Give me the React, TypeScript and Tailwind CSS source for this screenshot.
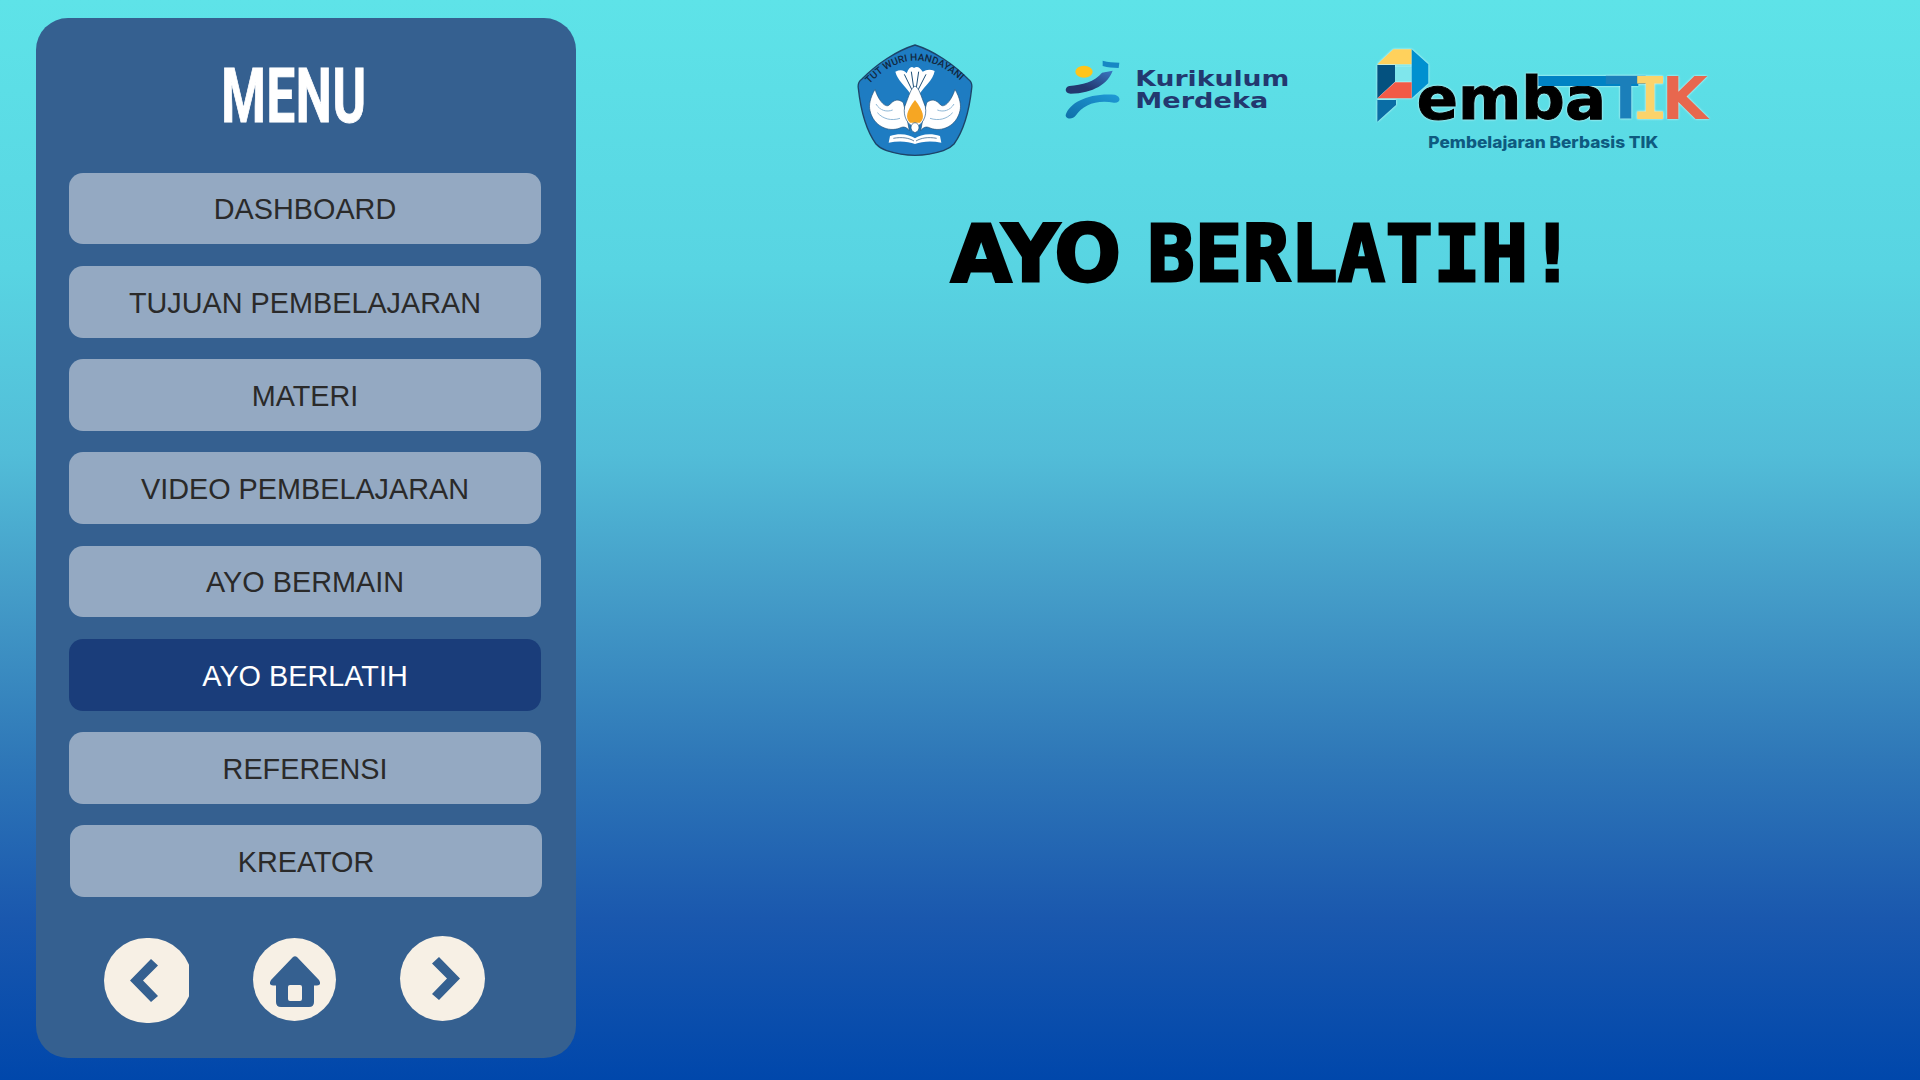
import React from 'react';

const menuItems = [
  { label: 'DASHBOARD', short: true },
  { label: 'TUJUAN PEMBELAJARAN' },
  { label: 'MATERI' },
  { label: 'VIDEO PEMBELAJARAN' },
  { label: 'AYO BERMAIN', short: true },
  { label: 'AYO BERLATIH', active: true },
  { label: 'REFERENSI' },
  { label: 'KREATOR' },
];

const Wing: React.FC = () => (
  <g>
    <path
      d="M75 148C60 175 56 195 60 212C70 258 115 278 150 264C162 258 170 262 178 272L172 240L160 188C146 176 132 178 118 195C105 205 85 180 75 148Z"
      fill="#fff"
      stroke="#1c4f78"
      strokeWidth="2"
    />
    <path d="M82 218C100 238 125 243 150 235M78 192C90 212 110 217 128 210" fill="none" stroke="#8fb8d6" strokeWidth="3" />
  </g>
);

const TutWuri: React.FC = () => (
  <svg viewBox="0 0 390 360" className="h-[120px] w-[130px]">
    <path
      d="M195 15C250 32 310 72 355 118Q368 128 365 145C358 210 342 270 312 312Q300 325 280 332C225 350 165 350 110 332Q90 325 78 312C48 270 32 210 25 145Q22 128 35 118C80 72 140 32 195 15Z"
      fill="#1e7cc2"
      stroke="#1d4468"
      strokeWidth="4"
    />
    <path id="tut-arc" d="M55 135Q195 -12 345 135" fill="none" />
    <text fontFamily="Roboto, sans-serif" fontWeight="500" fontSize="30" fill="#12283f">
      <textPath href="#tut-arc" startOffset="4">TUT WURI HANDAYANI</textPath>
    </text>
    <path
      d="M136 95Q158 84 170 100Q180 74 192 84Q205 74 218 95Q236 84 254 93C248 122 226 136 210 160L180 160C165 136 143 122 136 95Z"
      fill="#fff"
    />
    <path d="M163 103L186 150M184 95L192 150M206 95L198 150M228 103L204 150" stroke="#1c4f78" strokeWidth="3" fill="none" />
    <Wing />
    <g transform="translate(390 0) scale(-1 1)">
      <Wing />
    </g>
    <path d="M195 138C208 145 212 165 226 200C232 230 216 256 195 262C174 256 158 230 164 200C178 165 182 145 195 138Z" fill="#fff" stroke="#1c4f78" strokeWidth="2" />
    <path d="M195 180C170 212 164 234 180 248L210 248C226 234 220 212 195 180Z" fill="#f6a623" />
    <path d="M195 248C210 250 212 272 195 278C178 272 180 250 195 248Z" fill="#fff" stroke="#1c4f78" strokeWidth="2" />
    <path d="M120 288C150 278 180 284 195 295C210 284 240 278 270 288L274 308C245 302 215 304 195 312C175 304 145 302 116 308Z" fill="#fff" />
    <path d="M130 295C155 290 178 294 192 303M260 295C235 290 212 294 198 303" stroke="#1c4f78" strokeWidth="2" fill="none" />
  </svg>
);

const KurikulumLogo: React.FC = () => (
  <svg viewBox="0 0 810 300" className="h-[100px] w-[270px]">
    <defs>
      <linearGradient id="swoosh-top" x1="0" x2="1" y1="1" y2="0">
        <stop offset="0.35" stopColor="#23386f" />
        <stop offset="1" stopColor="#3a78c4" />
      </linearGradient>
      <linearGradient id="swoosh-bottom" x1="0" x2="1" y1="1" y2="0">
        <stop offset="0" stopColor="#0f6ea8" />
        <stop offset="1" stopColor="#1f9bd7" />
      </linearGradient>
    </defs>
    <ellipse cx="132" cy="95" rx="26" ry="18" fill="#ffc51a" />
    <path d="M188 62C205 68 220 66 238 68L236 84C218 82 204 84 188 78Z" fill="#1787c4" />
    <path d="M88 138C125 135 165 125 186 98L218 92C205 130 160 160 92 161C72 160 74 140 88 138Z" fill="url(#swoosh-top)" />
    <path d="M78 222C90 188 145 158 225 164C245 170 242 190 222 188C170 178 128 195 108 226C96 242 72 236 78 222Z" fill="url(#swoosh-bottom)" />
    <g fontFamily="'DejaVu Sans', sans-serif" fontWeight="700" fontSize="62" fill="#23386f">
      <text x="286" y="137" textLength="462" lengthAdjust="spacingAndGlyphs">Kurikulum</text>
      <text x="286" y="205" textLength="399" lengthAdjust="spacingAndGlyphs">Merdeka</text>
    </g>
  </svg>
);

const PembaTikLogo: React.FC = () => (
  <svg viewBox="0 0 1110 390" className="h-[130px] w-[370px]">
    <g className="drop-shadow-[0_0_3px_#e4fcfd]">
      <path d="M105 110H155V155H105Z" fill="#7fe6ec" />
      <path d="M52 103L100 58H155V103Z" fill="#ffd15c" />
      <path d="M155 58L205 103V160L155 205V155V110Z" fill="#0090d0" />
      <path d="M52 105H105V155L52 205Z" fill="#04517f" />
      <path d="M52 205L105 157H155V205Z" fill="#f25a46" />
      <path d="M52 210H108V225L52 275Z" fill="#0a6da5" />
      <g fontFamily="'DejaVu Sans', sans-serif" fontWeight="700" fontSize="178">
        <text x="170" y="268" fill="#000" stroke="#000" strokeWidth="3" textLength="568" lengthAdjust="spacingAndGlyphs">
          emba
        </text>
        <path d="M535 138H835V168H535Z" fill="#0082c4" />
        <text x="797" y="268" textAnchor="middle" fill="#1b7fba">T</text>
        <text x="870" y="268" textAnchor="middle" fontFamily="'DejaVu Sans Mono', monospace" fill="#fbd36b">I</text>
        <text x="905" y="268" fill="#e8674e">K</text>
      </g>
    </g>
    <text x="205" y="354" fontFamily="Inter, sans-serif" fontWeight="800" fontSize="48" fill="#0e5a80" textLength="690" lengthAdjust="spacingAndGlyphs">
      Pembelajaran Berbasis TIK
    </text>
  </svg>
);

export default function App() {
  return (
    <div className="flex h-screen w-full overflow-hidden bg-[linear-gradient(180deg,#5ee3e8_0%,#58d4e2_25%,#52bdd8_42%,#449cc8_55%,#2f78b8_70%,#1a58ae_85%,#0047ab_100%)]">
      <aside className="mt-[18px] ml-[36px] flex h-[1040px] w-[540px] shrink-0 flex-col rounded-[32px] bg-[#356090] pl-[33px]">
        <h2 className="mt-[28px] mb-[2px] h-[125px] w-[450px] scale-x-[0.67] text-center font-['Roboto',sans-serif] text-[76px] leading-[100px] font-bold tracking-[1px] text-white [-webkit-text-stroke:1px_white]">
          MENU
        </h2>
        <div className="flex flex-col gap-[21px]">
          {menuItems.map((item, index) => (
            <button
              key={item.label}
              className={`flex w-[472px] items-center justify-center rounded-[14px] pt-[3px] font-['Liberation_Sans',Arial,sans-serif] text-[28.8px] ${
                item.active ? 'bg-[#1a3d7a] text-white' : 'bg-[#94a9c2] text-[#2a2a2a]'
              } ${item.short ? 'mb-px h-[71px]' : 'h-[72px]'} ${index >= 4 ? 'translate-y-px' : ''} ${index === 7 ? 'translate-x-px' : ''}`}
            >
              {item.label}
            </button>
          ))}
        </div>
        <div className="mt-[40px] flex items-start gap-[64px] pl-[35px]">
          <div className="mt-[2px] h-[85px] w-[85px] overflow-hidden">
            <div className="flex h-[85px] w-[88px] items-center justify-center rounded-full bg-[#f7f0e5] pr-[8px]">
              <svg viewBox="0 0 28 43" className="h-[43px] w-[28px]" fill="#356090">
                <path d="M0 21.5L21 0L28 6.5L13 21.5L28 37L21 43Z" />
              </svg>
            </div>
          </div>
          <div className="mt-[2px] flex h-[83px] w-[83px] items-center justify-center rounded-full bg-[#f7f0e5] pt-[3px]">
            <svg viewBox="0 0 50 51" className="h-[51px] w-[50px]" fill="#356090">
              <path
                fillRule="evenodd"
                d="M23 1Q25 -0.5 27 1L49 24Q52 29 47 29.5H44V46Q44 51 39 51H11Q6 51 6 46V29.5H3Q-2 29 1 24ZM20 29Q18 29 18 31V43Q18 45 20 45H30Q32 45 32 43V31Q32 29 30 29Z"
              />
            </svg>
          </div>
          <div className="flex h-[85px] w-[85px] items-center justify-center rounded-full bg-[#f7f0e5] pl-[7px]">
            <svg viewBox="0 0 28 43" className="h-[43px] w-[28px]" fill="#356090">
              <path d="M28 21.5L7 0L0 6.5L15 21.5L0 37L7 43Z" />
            </svg>
          </div>
        </div>
      </aside>
      <main className="flex-1">
        <div className="mt-[30px] flex items-start">
          <div className="mt-[10px] ml-[274px]">
            <TutWuri />
          </div>
          <div className="mt-[10px] ml-[60px]">
            <KurikulumLogo />
          </div>
          <div className="ml-[50px]">
            <PembaTikLogo />
          </div>
        </div>
        <h1 className="mt-[49px] ml-[375px] flex gap-[28px] text-[78px] leading-[90px] font-bold whitespace-nowrap text-black [-webkit-text-stroke:3px_black]">
          <span className="font-['DejaVu_Sans',sans-serif] tracking-[-1.5px]">AYO</span>
          <span className="font-['DejaVu_Sans_Mono',monospace] tracking-[0.7px]">BERLATIH!</span>
        </h1>
      </main>
    </div>
  );
}
